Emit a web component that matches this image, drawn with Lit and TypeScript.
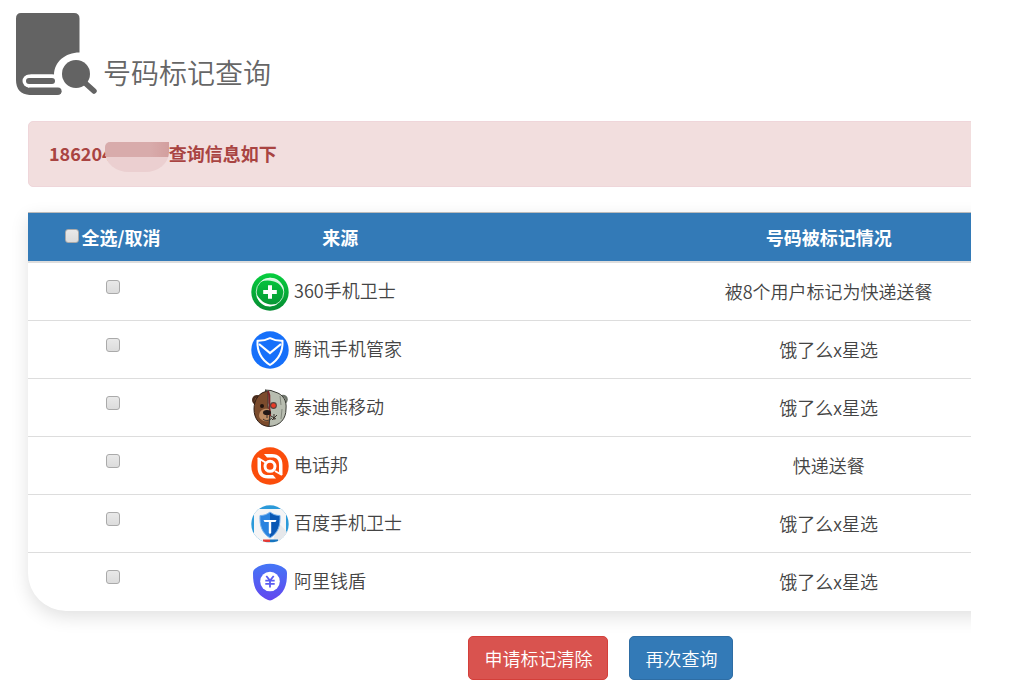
import { LitElement, html, css, svg, TemplateResult } from "lit";
import { customElement, state } from "lit/decorators.js";

interface Source {
  id: string;
  name: string;
  status: string;
  icon: TemplateResult;
}

const shield360 = svg`
  <defs>
    <linearGradient id="g360" x1="0" y1="0" x2="0" y2="1">
      <stop offset="0" stop-color="#06cf3e" />
      <stop offset="1" stop-color="#068c33" />
    </linearGradient>
  </defs>
  <circle cx="19" cy="19" r="18.7" fill="url(#g360)" />
  <circle cx="19" cy="19" r="13.8" fill="none" stroke="#b9ecc6" stroke-width="1" />
  <path d="M10 8.500C15 3.500 24 3.500 28.500 8.500C32 12 33 15 32.800 18.500C30.500 12 27 9.500 22 8.200C18 7.200 14 7.400 10 8.500Z" fill="#e9fbee" opacity=".9" />
  <path d="M5.600 22C9 25.500 11 29.500 17 31C20.500 32 24 31.600 26.500 30.800C22 34.500 15 34.300 11 31C7.500 28.300 6 25.500 5.600 22Z" fill="#fff" />
  <path d="M17 12.200h4v4.800h4.800v4h-4.800v4.800h-4v-4.800h-4.800v-4h4.800z" fill="#fff" />`;

const tencent = svg`
  <circle cx="19" cy="19" r="18.700" fill="#1670fa" />
  <path d="M19 7.200C23 9.200 27 10 31.500 9.800C32 20 28 28.500 19 34C10 28.500 6 20 6.500 9.800C11 10 15 9.200 19 7.200Z" fill="none" stroke="#fff" stroke-width="2" stroke-linejoin="round" />
  <path d="M8 13L19 22L30 13" fill="none" stroke="#fff" stroke-width="2.200" />`;

const bear = svg`
  <circle cx="6" cy="11" r="5" fill="#4a2c1c" />
  <circle cx="6.500" cy="11.500" r="3" fill="#7a4c2c" />
  <circle cx="32" cy="10.500" r="4.800" fill="#6d736a" />
  <circle cx="31.500" cy="11" r="3" fill="#a5aa9e" />
  <path d="M19 2C8 2 3 11 3 20C3 30 9 37.500 19 37.500Z" fill="#7b4b2c" stroke="#2e1d15" />
  <path d="M17 3L14 1L20 1.500L24 3C32 5 36 12 35 20C35 30 29 37 18 37.500L19 27L17 18Z" fill="#b8bdb0" stroke="#3a3b36" />
  <path d="M17 2C20 8 17 12 19 16C17 20 20 22 19 27" fill="none" stroke="#7c2525" stroke-width="2" />
  <path d="M8 27C8 21 13 19 18 20V32C13 33 9 31 8 27Z" fill="#bd8c62" />
  <ellipse cx="16" cy="23.500" rx="4" ry="2.600" fill="#231916" />
  <path d="M16 26V29M12 30C15 33 19 31 21 29M20 27L25 30M21 31L26 26M23 25V31" fill="none" stroke="#3b302b" stroke-width="1" />
  <circle cx="11" cy="17" r="2" fill="#20130e" />
  <circle cx="22.500" cy="16.500" r="3.400" fill="#57443f" />
  <circle cx="22.500" cy="16.500" r="2.300" fill="#e93a26" />
  <path d="M29 7L30 16M31 20L30 30" stroke="#82877d" fill="none" />`;

const phoneClub = svg`
  <circle cx="19" cy="19" r="18.700" fill="#fb4d0b" />
  <path d="M13 7H21C28 7 31.500 11 31.500 18V28L28 26V18C28 13 26 10.500 21 10.500H16Z" fill="#fff" />
  <path d="M25 31.500H17C10 31.500 6.500 27.500 6.500 20V10.500L10 13V20C10 25.500 12 28 17 28H22Z" fill="#fff" />
  <path d="M7 11L14.500 15.500M24 24L31 28" stroke="#fff" stroke-width="2" />
  <circle cx="19" cy="19.300" r="5" fill="none" stroke="#fff" stroke-width="3" />`;

const baidu = svg`
  <defs>
    <clipPath id="disc"><circle cx="19" cy="19" r="18.700" /></clipPath>
    <linearGradient id="gbd" x1="0" y1="0" x2="1" y2="0">
      <stop offset=".5" stop-color="#2b83df" />
      <stop offset=".5" stop-color="#0b58b4" />
    </linearGradient>
  </defs>
  <g clip-path="url(#disc)">
    <rect width="38" height="38" fill="#2b9ad9" />
    <rect x="3" y="4" width="32" height="36" rx="4" fill="#f5f5f6" />
    <path d="M26 16L36 27V38H22Z" fill="#e6e8eb" />
    <path d="M19 7C22 9.500 25 10.500 29 10.500C29.500 21 27 28 19 33C11 28 8.500 21 9 10.500C13 10.500 16 9.500 19 7Z" fill="url(#gbd)" stroke="#74b1ed" />
    <path d="M12.500 15H25.500L24.500 17H20.200V28L19 29L17.800 28V17H13.500Z" fill="#fff" />
    <rect x="12" y="34.500" width="7" height="2.500" fill="#e23a35" />
    <rect x="19" y="34.500" width="8" height="2.500" fill="#1774bf" />
  </g>`;

const alipay = svg`
  <defs>
    <linearGradient id="gali" x1="0" y1="0" x2="0" y2="1">
      <stop offset="0" stop-color="#4576f6" />
      <stop offset="1" stop-color="#6247ef" />
    </linearGradient>
  </defs>
  <path d="M19 .8C24 .8 30 2.500 34 5.800C35.500 7 36 8.500 36 10.500C36 22 34 31 21 37C19.600 37.600 18.400 37.600 17 37C4 31 2 22 2 10.500C2 8.500 2.500 7 4 5.800C8 2.500 14 .8 19 .8Z" fill="url(#gali)" />
  <circle cx="19" cy="18.500" r="9.800" fill="#fff" />
  <path d="M15.300 13L19 17.500L22.700 13M14.300 17.700H23.700M14.300 20.900H23.700M19 17.500V24.500" fill="none" stroke="#5a5bf2" stroke-width="1.800" />`;

const SOURCES: Source[] = [
  { id: "s360", name: "360手机卫士", status: "被8个用户标记为快递送餐", icon: shield360 },
  { id: "tencent", name: "腾讯手机管家", status: "饿了么x星选", icon: tencent },
  { id: "teddy", name: "泰迪熊移动", status: "饿了么x星选", icon: bear },
  { id: "dianhua", name: "电话邦", status: "快递送餐", icon: phoneClub },
  { id: "baidu", name: "百度手机卫士", status: "饿了么x星选", icon: baidu },
  { id: "ali", name: "阿里钱盾", status: "饿了么x星选", icon: alipay },
];

@customElement("app-root")
export class AppRoot extends LitElement {
  static styles = css`
    :host {
      display: block;
      color: #444;
      font-family: "Noto Sans CJK SC", sans-serif;
      font-size: 18px;
      font-weight: 350;
      line-height: 24px;
    }
    * {
      box-sizing: border-box;
    }
    .page {
      margin-right: 38px;
      padding-bottom: 19px;
      overflow-x: clip;
    }
    .title {
      display: flex;
      align-items: flex-end;
      gap: 5px;
      padding: 13px 16px 0;
    }
    .title svg {
      width: 82px;
      height: 82px;
      flex: none;
    }
    .title h1 {
      margin: 0 0 3px;
      color: #666;
      font-size: 28px;
      font-weight: 350;
      line-height: 40px;
    }
    .content {
      width: 121%;
      margin: 26px 0 0 28px;
      padding-right: 29px;
    }
    .alert {
      display: flex;
      align-items: center;
      height: 66px;
      padding: 0 20px 2px;
      border: 1px solid #efd6da;
      border-radius: 5px;
      background: #f2dede;
      color: #a94442;
      font-weight: 700;
    }
    .mask {
      width: 64px;
      height: 30px;
      margin: 7px 0 0 -8px;
      border-radius: 5px 0 24px 24px / 5px 0 20px 20px;
      background:
        linear-gradient(90deg, transparent 70%, rgba(190, 110, 108, 0.2)) top / 100% 50% no-repeat,
        linear-gradient(#d8abab 50%, #ebcfd0 50%);
    }
    .panel {
      margin-top: 25px;
      border-radius: 0 0 38px 38px;
      background: #fff;
      box-shadow: 0 6px 18px rgba(0, 0, 0, 0.12);
    }
    table {
      width: 100%;
      border-collapse: separate;
      border-spacing: 0;
      table-layout: fixed;
    }
    th,
    td {
      height: 58px;
      padding: 0 0 2px;
      border-bottom: 1px solid #ddd;
      text-align: center;
    }
    tbody tr:last-child td {
      border-bottom: 0;
    }
    th {
      height: 51px;
      padding: 0;
      border-top: 1px solid #bbb;
      border-bottom: 2px solid #ddd;
      background: #337ab7;
      color: #fff;
      font-weight: 700;
    }
    .col-check {
      width: 169px;
    }
    .col-source {
      width: 25%;
    }
    .all {
      display: flex;
      justify-content: center;
      gap: 3px;
    }
    td.pick {
      padding-top: 17px;
      vertical-align: top;
      line-height: 0;
    }
    td.origin {
      padding-bottom: 0;
    }
    input {
      appearance: none;
      width: 14px;
      height: 14px;
      margin: 0;
      border: 1px solid #aaa;
      border-radius: 3px;
      background: linear-gradient(#e9e9e9, #dcdcdc);
    }
    .all input {
      margin-top: 4px;
    }
    input:checked {
      background: #337ab7;
    }
    .source {
      display: flex;
      align-items: center;
      gap: 5px;
      padding-left: 54px;
    }
    .source svg {
      width: 38px;
      height: 38px;
      flex: none;
    }
    .source span {
      padding-bottom: 4px;
    }
    .actions {
      display: flex;
      justify-content: center;
      gap: 21px;
      margin-top: 25px;
    }
    button {
      height: 44px;
      padding: 0 15px 1px;
      border: 1px solid #2e6da4;
      border-radius: 5px;
      background: #337ab7;
      color: #fff;
      font: inherit;
    }
    .danger {
      border-color: #d43f3a;
      background: #d9534f;
    }
  `;

  @state() private picked: string[] = [];

  private toggleAll(e: Event) {
    const on = (e.target as HTMLInputElement).checked;
    this.picked = on ? SOURCES.map((s) => s.id) : [];
  }

  private toggle(id: string) {
    this.picked = this.picked.includes(id)
      ? this.picked.filter((p) => p !== id)
      : [...this.picked, id];
  }

  render() {
    return html`
      <main class="page">
        <header class="title">
          <svg viewBox="0 0 82 82" aria-hidden="true">
            <path d="M5 0H58Q63.500 0 63.500 5.500V39.500C49 39.500 38.500 49 38 61.500H15A7.500 7.500 0 0 0 15 76H43Q45.500 76.500 45.500 78.500Q45 82 41 82H14Q0 81 0 67V5.500Q0 0 5 0Z" fill="#636363" />
            <path d="M13 68H36" stroke="#fff" stroke-width="13" stroke-linecap="round" />
            <path d="M13 68H36" stroke="#636363" stroke-width="6" stroke-linecap="round" />
            <path d="M14 78H42" stroke="#636363" stroke-width="7" stroke-linecap="round" />
            <circle cx="60" cy="61" r="14" fill="#636363" />
            <path d="M68 69L78 78" stroke="#636363" stroke-width="5.500" stroke-linecap="round" />
          </svg>
          <h1>号码标记查询</h1>
        </header>
        <div class="content">
          <div class="alert" role="alert">
            <span>186204</span><span class="mask"></span><span>查询信息如下</span>
          </div>
          <div class="panel">
            <table>
              <thead>
                <tr>
                  <th class="col-check">
                    <label class="all">
                      <input
                        type="checkbox"
                        .checked=${this.picked.length === SOURCES.length}
                        @change=${this.toggleAll}
                      /><span>全选/取消</span>
                    </label>
                  </th>
                  <th class="col-source">来源</th>
                  <th>号码被标记情况</th>
                </tr>
              </thead>
              <tbody>
                ${SOURCES.map(
                  (s) => html`
                    <tr>
                      <td class="pick">
                        <input
                          type="checkbox"
                          id=${s.id}
                          .checked=${this.picked.includes(s.id)}
                          @change=${() => this.toggle(s.id)}
                        />
                      </td>
                      <td class="origin">
                        <label class="source" for=${s.id}>
                          <svg viewBox="0 0 38 38" aria-hidden="true">${s.icon}</svg>
                          <span>${s.name}</span>
                        </label>
                      </td>
                      <td>${s.status}</td>
                    </tr>
                  `
                )}
              </tbody>
            </table>
          </div>
          <div class="actions">
            <button class="danger" type="button">申请标记清除</button>
            <button type="button">再次查询</button>
          </div>
        </div>
      </main>
    `;
  }
}
